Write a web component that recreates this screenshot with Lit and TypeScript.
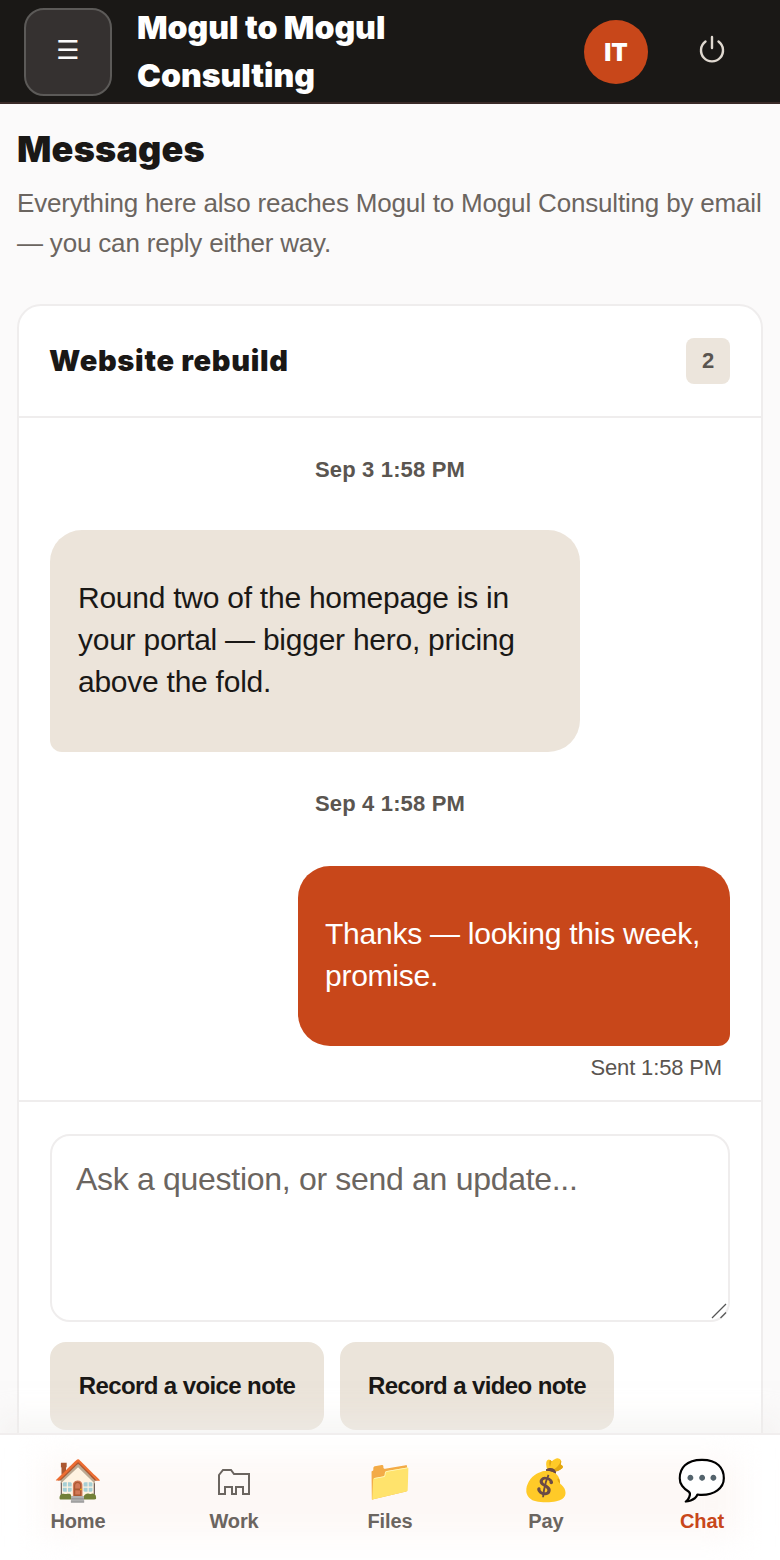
import { LitElement, html, css } from "lit";
import { customElement } from "lit/decorators.js";

const NAV = [
  { icon: "🏠", label: "Home" },
  { icon: "", label: "Work", folder: true },
  { icon: "📁", label: "Files" },
  { icon: "💰", label: "Pay" },
  { icon: "💬", label: "Chat", active: true },
];

@customElement("app-root")
export class AppRoot extends LitElement {
  static styles = css`
    :host {
      display: block;
      position: relative;
      height: 100vh;
      overflow: hidden;
      background: #fbfafa;
      color: #1a1816;
      font-family: "Liberation Sans", Arial, sans-serif;
    }
    * { box-sizing: border-box; }
    .top {
      height: 104px;
      background: #1a1816;
      border-bottom: 2px solid #3a2a28;
      display: flex;
      align-items: center;
      padding: 2px 0 0 24px;
    }
    .menu {
      width: 88px; height: 88px;
      flex: none;
      border: 2px solid #5c5a58;
      border-radius: 20px;
      background: #353130;
      color: #fbfafa;
      display: flex;
      align-items: center; justify-content: center;
      padding: 0 0 4px;
      font-family: "DejaVu Sans", sans-serif;
      font-size: 26px;
      line-height: 1;
    }
    .brand {
      margin-left: 25px;
      width: 300px;
      font-family: Inter, sans-serif;
      font-weight: 900;
      font-size: 32px;
      line-height: 48px;
      color: #fff;
    }
    .avatar {
      margin-left: auto;
      flex: none;
      width: 64px; height: 64px;
      border-radius: 50%;
      background: #c8471a;
      color: #fff;
      font-family: Inter, sans-serif;
      font-weight: 900;
      font-size: 24px;
      display: flex; align-items: center; justify-content: center;
    }
    .power { flex: none; margin: -6px 52px 0 48px; width: 32px; height: 32px; display: block; }
    .page { padding: 24px 17px 0; }
    h1 {
      margin: 0;
      font-family: Inter, sans-serif;
      font-weight: 900;
      font-size: 36px;
      line-height: 42px;
      letter-spacing: 0.2px;
      color: #1a1816;
    }
    .sub {
      margin: 13px 0 0;
      font-size: 26px;
      line-height: 40px;
      letter-spacing: -0.18px;
      color: #6b6560;
    }
    .card {
      margin-top: 41px;
      background: #fff;
      border: 2px solid #efeded;
      border-radius: 24px;
    }
    .head {
      height: 112px;
      border-bottom: 2px solid #efeded;
      padding: 0 31px 2px;
      display: flex; align-items: center; justify-content: space-between;
    }
    h2 {
      margin: 0 0 0 -1px;
      font-family: Inter, sans-serif;
      font-weight: 900;
      font-size: 29px;
      letter-spacing: 0.7px;
      color: #1a1816;
    }
    .count {
      width: 44px; height: 46px;
      margin-top: 2px;
      border-radius: 8px;
      background: #ece5dc;
      color: #5a5550;
      font-weight: 700;
      font-size: 22px;
      display: flex; align-items: center; justify-content: center;
    }
    .thread { padding: 0 31px; display: flex; flex-direction: column; }
    .stamp {
      text-align: center;
      font-weight: 700;
      font-size: 22px;
      letter-spacing: 0.15px;
      line-height: 28px;
      color: #5a5550;
    }
    .stamp.a { margin-top: 38px; }
    .stamp.b { margin-top: 38px; }
    .bubble {
      font-size: 30px;
      line-height: 42px;
      letter-spacing: -0.25px;
      padding: 47px 28px 49px;
    }
    .in {
      margin-top: 46px;
      width: 530px;
      background: #ece4da;
      border-radius: 32px 32px 32px 12px;
    }
    .out {
      margin-top: 48px;
      align-self: flex-end;
      width: 432px;
      padding-left: 27px; padding-right: 20px;
      background: #c8471a;
      color: #fff;
      border-radius: 32px 32px 12px 32px;
    }
    .sent {
      align-self: flex-end;
      margin: 8px 8px 0 0;
      font-size: 22px;
      letter-spacing: -0.15px;
      line-height: 28px;
      color: #5a5550;
    }
    .foot {
      margin-top: 18px;
      border-top: 2px solid #efeded;
      padding: 32px 31px;
    }
    .field { position: relative; }
    textarea {
      display: block;
      width: 100%;
      height: 188px;
      border: 2px solid #efeded;
      border-radius: 20px;
      padding: 23px 24px;
      font-family: inherit;
      font-size: 32px;
      line-height: 40px;
      letter-spacing: -0.3px;
      outline: none;
      background: #fff;
      resize: none;
    }
    textarea::placeholder { color: #6b6560; opacity: 1; }
    .grip {
      position: absolute; right: 2px; bottom: 2px;
      width: 18px; height: 18px;
      pointer-events: none;
    }
    .btns { display: flex; gap: 16px; margin-top: 20px; }
    .btn {
      width: 274px; height: 88px;
      border: 0; border-radius: 16px;
      background: #ebe4da;
      color: #1a1816;
      font-family: inherit;
      font-weight: 700;
      font-size: 24px;
      letter-spacing: -0.6px;
    }
    nav {
      position: absolute; left: 0; right: 0; bottom: 0;
      height: 127px;
      background: #fff;
      border-top: 2px solid #f1eeee;
      box-shadow: 0 -16px 24px rgba(240, 238, 236, 0.5);
      display: grid;
      grid-template-columns: repeat(5, 1fr);
      overflow: hidden;
    }
    nav::before {
      content: "";
      position: absolute; left: 40px; right: 40px; top: 24px; bottom: 24px;
      background: #fdf8f6;
      filter: blur(16px);
    }
    .item {
      position: relative;
      display: flex; flex-direction: column; align-items: center;
      padding-top: 18px;
      color: #6b6560;
      font-weight: 700;
      font-size: 20px;
    }
    .item.active { color: #c8471a; }
    .ico {
      height: 54px;
      padding-top: 2px;
      font-size: 40px;
      line-height: 52px;
      font-family: "Noto Color Emoji", "DejaVu Sans", sans-serif;
      display: flex; align-items: center; justify-content: center;
    }
    .folder { width: 32px; height: 27px; margin-top: 1px; display: block; }
    .lbl { line-height: 26px; letter-spacing: -0.1px; margin-top: 1px; }
  `;

  private folderIcon() {
    return html`<svg class="folder" viewBox="0 0 32 27" fill="none" stroke="#6b6560" stroke-width="2" stroke-linejoin="miter">
      <path d="M1 26V7l4-5h8l3 4h15v20h-6v-7h-7v7h-4v-7H7v7Z"/>
    </svg>`;
  }

  render() {
    return html`
      <header class="top">
        <button class="menu" aria-label="Menu">☰</button>
        <div class="brand">Mogul to Mogul Consulting</div>
        <div class="avatar">IT</div>
        <svg class="power" viewBox="0 0 32 32" fill="none" stroke="#e0d9d0" stroke-width="2.4" stroke-linecap="round">
          <path d="M16 4v11"/>
          <path d="M9.5 8.5a11 11 0 1 0 13 0"/>
        </svg>
      </header>
      <main class="page">
        <h1>Messages</h1>
        <p class="sub">Everything here also reaches Mogul to Mogul Consulting by email — you can reply either way.</p>
        <section class="card">
          <div class="head"><h2>Website rebuild</h2><span class="count">2</span></div>
          <div class="thread">
            <div class="stamp a">Sep 3 1:58 PM</div>
            <div class="bubble in">Round two of the homepage is in your portal — bigger hero, pricing above the fold.</div>
            <div class="stamp b">Sep 4 1:58 PM</div>
            <div class="bubble out">Thanks — looking this week, promise.</div>
            <div class="sent">Sent 1:58 PM</div>
          </div>
          <div class="foot">
            <div class="field">
              <textarea placeholder="Ask a question, or send an update..."></textarea>
              <svg class="grip" viewBox="0 0 18 18" stroke="#555" stroke-width="1.3" fill="none">
                <path d="M2 16 16 2"/>
                <path d="M10.5 16 16 10.5"/>
              </svg>
            </div>
            <div class="btns">
              <button class="btn">Record a voice note</button>
              <button class="btn">Record a video note</button>
            </div>
          </div>
        </section>
      </main>
      <nav>
        ${NAV.map(
          (n) => html`<div class="item ${n.active ? "active" : ""}"><span class="ico">${n.folder ? this.folderIcon() : n.icon}</span><span class="lbl">${n.label}</span></div>`
        )}
      </nav>
    `;
  }
}
